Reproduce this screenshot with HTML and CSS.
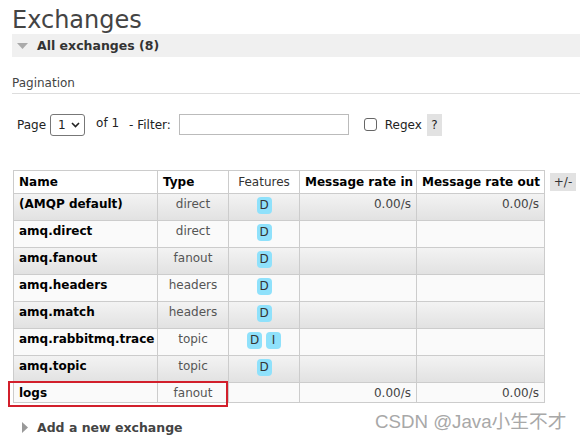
FILE: index.html
```html
<!DOCTYPE html>
<html>
<head>
<meta charset="utf-8">
<link rel="stylesheet" href="styles.css">
</head>
<body>
<div class="page">
  <h1 class="title">Exchanges</h1>
  <div class="section-bar">
    <svg class="tri" width="11" height="6" viewBox="0 0 11 6"><path d="M0 0 H11 L5.5 6 Z" fill="#aaa"/></svg>
    <span>All exchanges (8)</span>
  </div>
  <div class="pagination-title">Pagination</div>
  <div class="pager">
    <span>Page</span>
    <span class="select"><span>1</span><svg width="9" height="6" viewBox="0 0 9 6"><path d="M1 1 L4.5 4.5 L8 1" fill="none" stroke="#222" stroke-width="1.6"/></svg></span>
    <span class="of">of 1</span>
    <span class="filter-label">- Filter:</span>
    <span class="input"></span>
    <span class="checkbox"></span>
    <span class="regex">Regex</span>
    <span class="help">?</span>
  </div>
  <div class="table-wrap">
    <table class="list">
      <colgroup>
        <col class="c-name"><col class="c-type"><col class="c-feat"><col class="c-in"><col class="c-out">
      </colgroup>
      <thead>
        <tr>
          <th>Name</th>
          <th>Type</th>
          <th class="h-feat">Features</th>
          <th>Message rate in</th>
          <th>Message rate out</th>
        </tr>
      </thead>
      <tbody>
        <tr class="alt"><td class="name">(AMQP default)</td><td class="type">direct</td><td class="feat"><span class="badge">D</span></td><td class="rate">0.00/s</td><td class="rate">0.00/s</td></tr>
        <tr><td class="name">amq.direct</td><td class="type">direct</td><td class="feat"><span class="badge">D</span></td><td class="rate"></td><td class="rate"></td></tr>
        <tr class="alt"><td class="name">amq.fanout</td><td class="type">fanout</td><td class="feat"><span class="badge">D</span></td><td class="rate"></td><td class="rate"></td></tr>
        <tr><td class="name">amq.headers</td><td class="type">headers</td><td class="feat"><span class="badge">D</span></td><td class="rate"></td><td class="rate"></td></tr>
        <tr class="alt"><td class="name">amq.match</td><td class="type">headers</td><td class="feat"><span class="badge">D</span></td><td class="rate"></td><td class="rate"></td></tr>
        <tr><td class="name">amq.rabbitmq.trace</td><td class="type">topic</td><td class="feat"><span class="badge">D</span><span class="badge">I</span></td><td class="rate"></td><td class="rate"></td></tr>
        <tr class="alt"><td class="name">amq.topic</td><td class="type">topic</td><td class="feat"><span class="badge">D</span></td><td class="rate"></td><td class="rate"></td></tr>
        <tr class="short"><td class="name">logs</td><td class="type">fanout</td><td class="feat"></td><td class="rate">0.00/s</td><td class="rate">0.00/s</td></tr>
      </tbody>
    </table>
    <span class="toggle">+/-</span>
    <div class="highlight"></div>
  </div>
  <div class="add">
    <svg class="tri-r" width="6" height="11" viewBox="0 0 6 11"><path d="M0 0 L6 5.5 L0 11 Z" fill="#999"/></svg>
    <span>Add a new exchange</span>
  </div>
  <div class="watermark">CSDN @Java小生不才</div>
</div>
</body>
</html>
```

FILE: styles.css
```css
html, body {
  margin: 0;
  padding: 0;
  background: #fff;
}
body {
  font-family: "DejaVu Sans", Verdana, sans-serif;
  font-size: 12px;
  color: #333;
}
.page {
  position: relative;
  padding-left: 12px;
  height: 441px;
  overflow: hidden;
}
.title {
  margin: 6px 0 0 0;
  font-size: 24px;
  line-height: 28px;
  font-weight: normal;
  color: #444;
}
.section-bar {
  display: flex;
  align-items: center;
  height: 23px;
  background: #f0f0f0;
  font-weight: bold;
  font-size: 12.5px;
  color: #333;
}
.section-bar .tri {
  margin: 1px 9px 0 5px;
}
.pagination-title {
  margin-top: 19px;
  line-height: 14px;
  padding-bottom: 3px;
  border-bottom: 1px solid #ddd;
  color: #444;
}
.pager {
  display: flex;
  align-items: center;
  margin-top: 19px;
  padding-left: 5px;
  height: 23px;
  color: #222;
}
.select {
  display: inline-flex;
  align-items: center;
  box-sizing: border-box;
  width: 35px;
  height: 22px;
  margin-left: 4px;
  border: 1px solid #777;
  border-radius: 3px;
  padding-left: 7px;
  gap: 5px;
}
.of {
  margin-left: 11px;
  margin-bottom: 3px;
}
.filter-label {
  margin-left: 10px;
}
.input {
  display: inline-block;
  box-sizing: border-box;
  width: 170px;
  height: 21px;
  margin-left: 8px;
  border: 1px solid #bbb;
}
.checkbox {
  display: inline-block;
  box-sizing: border-box;
  width: 13px;
  height: 13px;
  margin-left: 15px;
  border: 1px solid #666;
  border-radius: 3px;
}
.regex {
  margin-left: 8px;
}
.help {
  display: inline-flex;
  align-items: center;
  justify-content: center;
  width: 15px;
  height: 22px;
  margin-left: 5px;
  background: #e2e2e2;
}
.table-wrap {
  position: relative;
  display: flex;
  align-items: flex-start;
  margin-top: 34px;
  margin-left: 1px;
}
.list {
  border-collapse: collapse;
  width: 531px;
  flex: none;
  table-layout: fixed;
}
.c-name { width: 144px; }
.c-type { width: 71px; }
.c-feat { width: 71px; }
.c-in { width: 117px; }
.c-out { width: 128px; }
.list th, .list td {
  border: 1px solid #ccc;
  padding: 3px 5px 0 5px;
  vertical-align: top;
  line-height: 14px;
  white-space: nowrap;
  overflow: hidden;
}
.list thead tr {
  height: 23px;
}
.list th {
  text-align: left;
  font-weight: bold;
  color: #000;
  background: #fff;
  padding-top: 4px;
}
.list th.h-feat {
  font-weight: normal;
  text-align: center;
  color: #333;
}
.list tbody tr {
  height: 27px;
  background: #fafafa;
}
.list tbody tr.alt {
  background: linear-gradient(#f3f3f3, #e1e1e1);
}
.list tbody tr.short {
  height: 20px;
}
.list td.name {
  font-weight: bold;
  color: #000;
}
.list td.type {
  text-align: center;
  color: #555;
}
.list td.feat {
  text-align: center;
  padding-top: 3px;
}
.list td.rate {
  text-align: right;
  color: #444;
}
.badge {
  display: inline-block;
  min-width: 15px;
  height: 17px;
  line-height: 17px;
  box-sizing: border-box;
  padding: 0 2px;
  margin: 0 2px;
  border-radius: 4px;
  background: #8fe1fb;
  color: #333;
  font-size: 12px;
  text-align: center;
}
.toggle {
  margin-left: 5px;
  margin-top: 3px;
  width: 26px;
  height: 18px;
  line-height: 18px;
  text-align: center;
  background: #e2e2e2;
  color: #333;
}
.highlight {
  position: absolute;
  left: -5px;
  top: 211px;
  width: 216px;
  height: 22px;
  border: 2px solid #d21f2b;
}
.add {
  display: flex;
  align-items: center;
  margin-top: 17px;
  padding-left: 10px;
  font-weight: bold;
  font-size: 12.5px;
  color: #444;
}
.add .tri-r {
  margin-right: 9px;
}
.watermark {
  position: absolute;
  left: 375px;
  top: 406px;
  font-family: "Liberation Sans", "Noto Sans CJK SC", sans-serif;
  font-size: 18.7px;
  color: #a8a8a8;
  text-shadow: 0 0 2px #fff;
}
```
